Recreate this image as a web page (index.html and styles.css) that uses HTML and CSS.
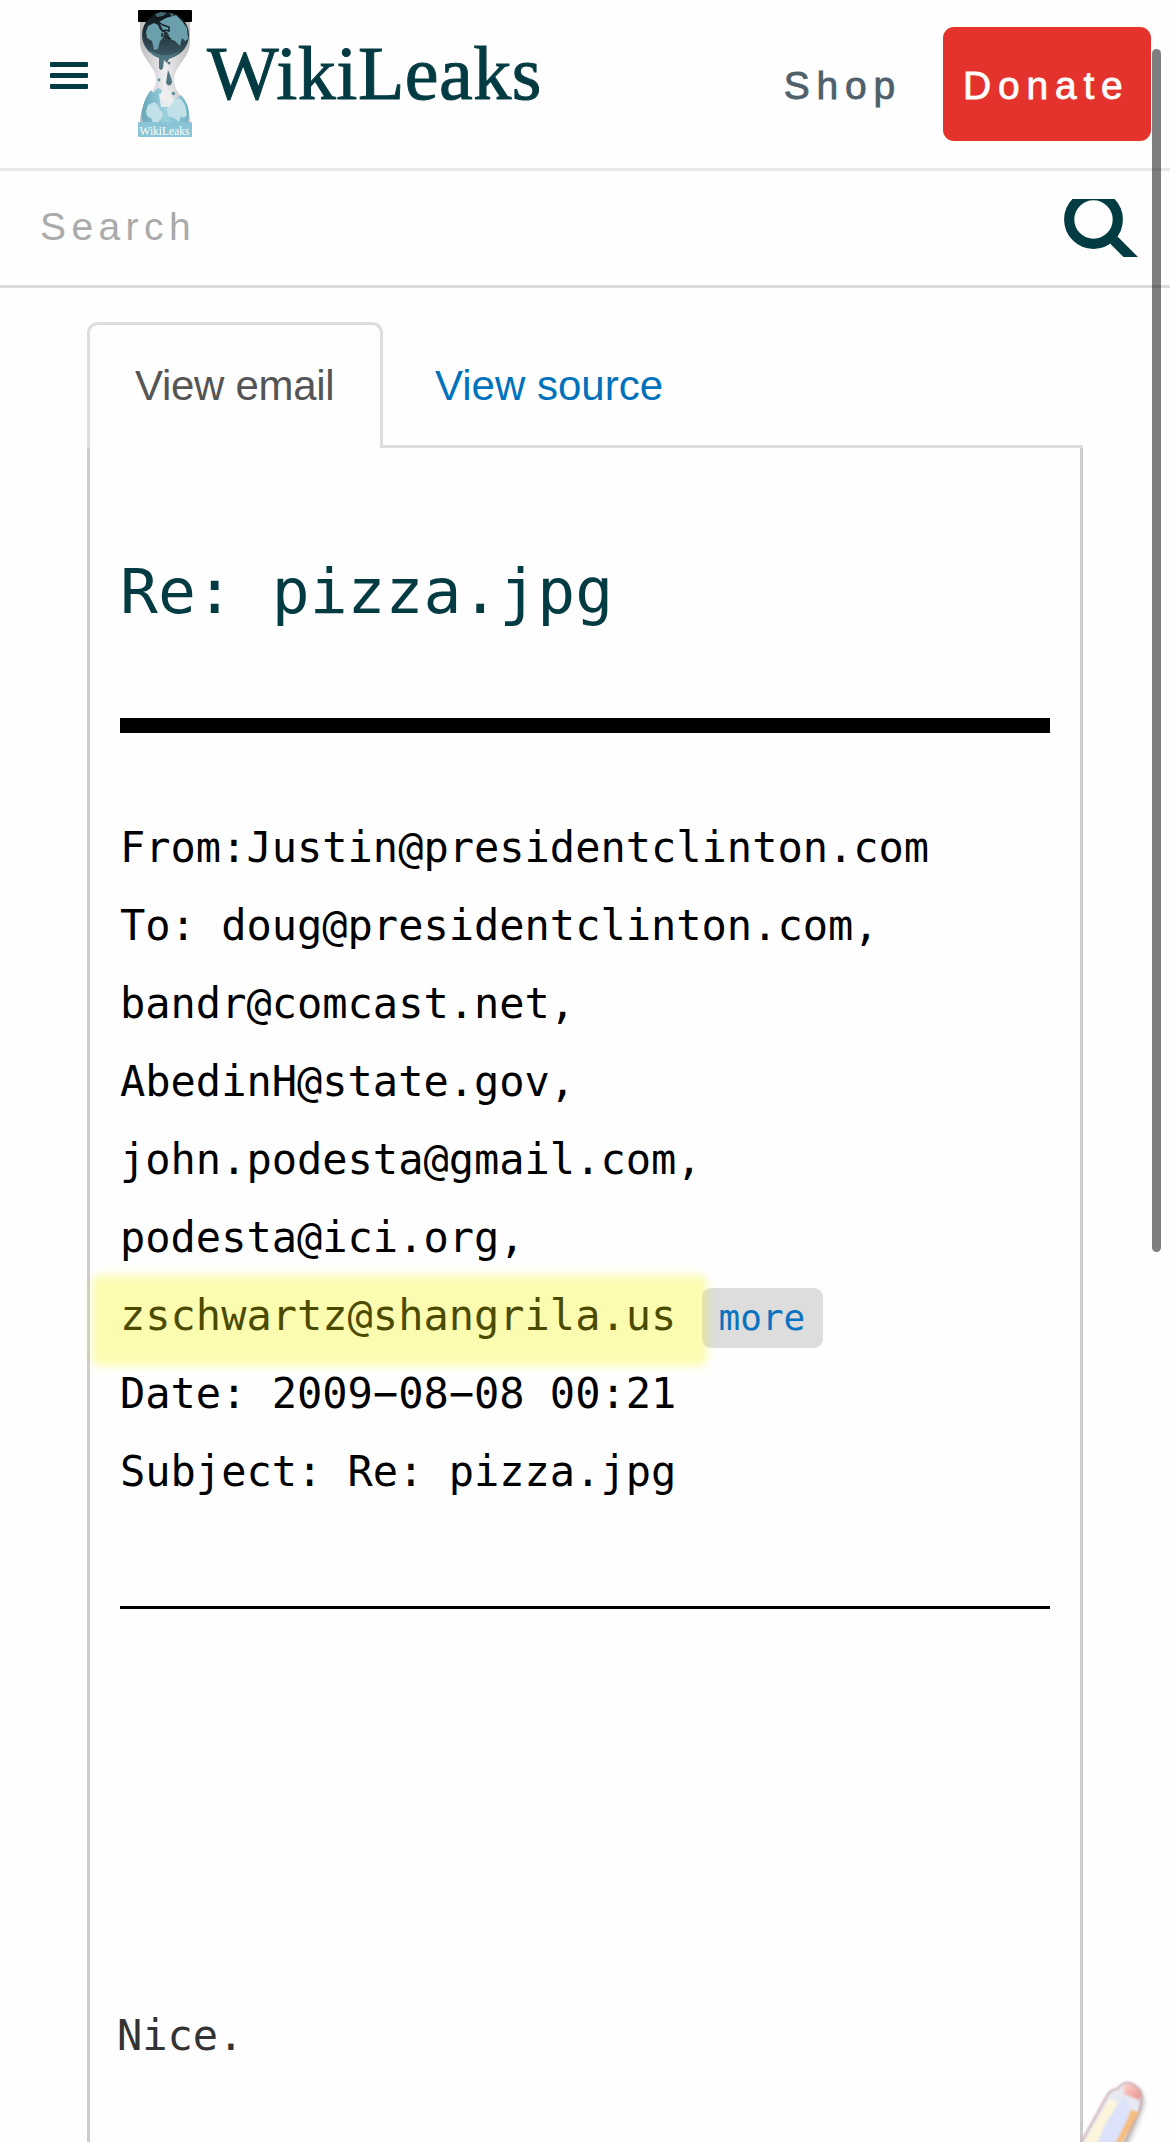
FILE: index.html
```html
<!DOCTYPE html>
<html lang="en">
<head>
<meta charset="utf-8">
<title>WikiLeaks - Re: pizza.jpg</title>
<link rel="stylesheet" href="styles.css">
</head>
<body>
<header class="topbar">
  <button class="menu" aria-label="Menu"><span></span><span></span><span></span></button>
  <svg class="logo" viewBox="0 0 54 127" width="54" height="127">
    <defs>
      <linearGradient id="cap" x1="0" y1="0" x2="0" y2="1"><stop offset="0" stop-color="#0a1114"/><stop offset="1" stop-color="#3f5d68"/></linearGradient>
      <linearGradient id="glass" x1="0" y1="0" x2="1" y2="0"><stop offset="0" stop-color="#bdbdbf"/><stop offset=".5" stop-color="#eeeef0"/><stop offset="1" stop-color="#bdbdbf"/></linearGradient>
      <linearGradient id="low" x1="0" y1="0" x2="1" y2="0"><stop offset="0" stop-color="#67a6b8"/><stop offset=".5" stop-color="#9dd0de"/><stop offset="1" stop-color="#6fb2c4"/></linearGradient>
    </defs>
    <path d="M2 8H52V32C52 48 36 56 36 70C36 84 52 90 52 113H2C2 90 18 84 18 70C18 56 2 48 2 32Z" fill="url(#glass)"/>
    <rect width="54" height="12" rx="1" fill="#000"/>
    <circle cx="27.500" cy="25" r="23.500" fill="url(#cap)"/>
    <path d="M10 16L16 13L20 15L22 20L26 22L25 28L22 31L20 39L16 40L14 31L9 28L8 22Z" fill="#6b9fac"/>
    <path d="M21 12L28 8L38 5L44 11L49 18L50 29L47 31L44 28L42 36L37 31L32 29L30 23L25 20Z" fill="#6b9fac"/>
    <path d="M17 4L23 2L29 3L25 6L19 7ZM31 3L36 4L34 7Z" fill="#45666f"/>
    <path d="M19 11L25 15L31 17L31 21L27 20L24 22M24 23V27M28 27L33 29" stroke="#14242a" stroke-width="1.500" fill="none"/>
    <path d="M11 40Q27 50 42 41Q35 48 31 49L29 53L26 50L25 58Q23 62 21 58L21 48Q14 46 11 40Z" fill="#4e7480"/>
    <path d="M30 60Q34 69 34 73Q31 78 28 73Z" fill="#4e7480"/>
    <circle cx="31" cy="53" r="1.500" fill="#4e7480"/><circle cx="21" cy="70" r="1.400" fill="#5c8e9c"/><circle cx="35.500" cy="83.500" r="1.700" fill="#5c8e9c"/>
    <path d="M13 80L15 83L20 78L24 80L22 88L31 94L43 85Q52 95 51 107Q49 117 43 119H12Q2 114 4 101Q6 88 13 80Z" fill="url(#low)"/>
    <path d="M10 95L16 92L20 95L22 100L25 103L24 108L21 111L19 117L15 117L14 109L9 106L8 101ZM33 90L42 88L47 95L49 105L46 108L43 106L41 112L36 108L30 106L29 99Z" fill="#c1e0e7"/>
    <path d="M21 84L31 80L36 91L31 97H23Z" fill="#eeeef0" opacity=".9"/>
    <rect y="112" width="54" height="15" rx="1" fill="#89c5d6"/>
    <text class="logo-caption" x="1.500" y="125" textLength="50" lengthAdjust="spacingAndGlyphs">WikiLeaks</text>
  </svg>
  <span class="wordmark">WikiLeaks</span>
  <nav class="actions">
    <a class="shop">Shop</a>
    <a class="donate">Donate</a>
  </nav>
</header>
<div class="search">
  <span class="search-label">Search</span>
  <svg class="search-icon" viewBox="0 0 74 58" width="74" height="58">
    <circle cx="29.500" cy="20.500" r="24.300" fill="none" stroke="#033b43" stroke-width="10.200"/>
    <path d="M46 44.500L59.500 58H74L53.500 37.500Z" fill="#033b43"/>
  </svg>
</div>
<main class="content">
  <div class="tabs">
    <a class="tab active">View email</a>
    <a class="tab">View source</a>
  </div>
  <article class="panel">
    <h1 class="title">Re: pizza.jpg</h1>
    <div class="meta">
      <div>From:Justin@presidentclinton.com</div>
      <div>To: doug@presidentclinton.com,</div>
      <div>bandr@comcast.net,</div>
      <div>AbedinH@state.gov,</div>
      <div>john.podesta@gmail.com,</div>
      <div>podesta@ici.org,</div>
      <div class="marked">zschwartz@shangrila.us <a class="more">more</a></div>
      <div>Date: 2009−08−08 00:21</div>
      <div>Subject: Re: pizza.jpg</div>
    </div>
    <p class="message">Nice.</p>
  </article>
</main>
<div class="scrollbar"></div>
<svg class="pencil" viewBox="0 0 90 72" width="90" height="72">
  <defs>
    <linearGradient id="rubber" x1="0" y1="0" x2="1" y2="1"><stop offset="0" stop-color="#fbd5d0"/><stop offset="1" stop-color="#ec8f89"/></linearGradient>
    <filter id="soft" x="-20%" y="-20%" width="140%" height="140%"><feGaussianBlur stdDeviation="2.500"/></filter>
    <filter id="edge"><feGaussianBlur stdDeviation=".9"/></filter>
  </defs>
  <path d="M20 80L46 24L59 15L70 20L75 32L69 50L56 80Z" fill="#888" opacity=".5" filter="url(#soft)"/>
  <g filter="url(#edge)">
    <path d="M7 80L38 24Q42 19 47 19L51 15Q56 11 63 14L69 19Q73 24 71 30L70 39L51 80Z" fill="#e6e9f2" stroke="#c39a9f" stroke-width="1.600"/>
    <path d="M11 78L39 29L48 32L27 80Z" fill="#fdf4dc"/>
    <path d="M39 80L61 40L69 42L48 80Z" fill="#f5bd7d"/>
    <path d="M25 80Q35 48 54 28Q62 33 58 48L42 80Z" fill="#dbe2fa"/>
    <path d="M53 17Q57 12 63 15L69 20Q72 25 69 30L54 24Z" fill="url(#rubber)"/>
  </g>
</svg>
</body>
</html>
```
FILE: styles.css
```css
* { box-sizing: border-box; }
html, body { margin: 0; height: 2142px; overflow: hidden; }
body {
  position: relative;
  background: #fefefe;
  color: #000;
  font-family: "Liberation Sans", Arial, sans-serif;
}

.topbar {
  display: flex;
  align-items: flex-start;
  height: 171px;
  padding: 10px 19px 0 50px;
  border-bottom: 3px solid #e8e8e8;
}
.menu {
  display: flex;
  flex-direction: column;
  gap: 6px;
  width: 38px;
  margin: 52px 50px 0 0;
  padding: 0;
  border: 0;
  background: none;
}
.menu span { height: 5px; border-radius: 1px; background: #033b43; }
.logo { flex: none; }
.logo-caption { font: 12px "Liberation Serif", serif; fill: #fff; }
.wordmark {
  margin: 21px 0 0 15px;
  font: 76px/84px "Liberation Serif", "Times New Roman", serif;
  letter-spacing: 0.5px;
  color: #033b43;
  -webkit-text-stroke: 1px #033b43;
}
.actions {
  display: flex;
  margin: 17px 0 0 auto;
  font-size: 39px;
  line-height: 117px;
  letter-spacing: 6.8px;
}
.shop { margin-right: 41px; color: #4f606a; -webkit-text-stroke: 0.8px #4f606a; }
.donate {
  width: 208px;
  height: 114px;
  padding-left: 20px;
  border-radius: 11px;
  background: #e4332c;
  color: #fff;
  -webkit-text-stroke: 0.8px #fff;
}

.search {
  display: flex;
  justify-content: space-between;
  align-items: center;
  height: 117px;
  padding: 0 32px 0 40px;
  border-bottom: 3px solid #dcdcdc;
}
.search-label { margin-bottom: 2px; font-size: 39px; letter-spacing: 5.4px; color: #aaa; }

.content { width: 996px; margin: 34px 0 0 87px; }
.tabs {
  display: flex;
  height: 126px;
  border-bottom: 3px solid #ddd;
}
.tab {
  height: 126px;
  padding: 0 49px;
  border: 3px solid transparent;
  border-bottom: 0;
  font-size: 42px;
  line-height: 122px;
  color: #0072bc;
}
.tab.active {
  width: 296px;
  padding: 0 45px;
  border-color: #ddd;
  border-radius: 11px 11px 0 0;
  background: #fefefe;
  letter-spacing: -0.3px;
  color: #555;
}

.panel {
  height: 1700px;
  padding: 0 30px;
  border: solid #ccc;
  border-width: 0 3px;
  font-family: "DejaVu Sans Mono", monospace;
}
.title {
  height: 285px;
  margin: 0;
  padding-top: 102px;
  border-bottom: 15px solid #000;
  font-size: 63px;
  font-weight: 400;
  line-height: 84px;
  color: #033b43;
}
.meta {
  height: 876px;
  padding-top: 76px;
  border-bottom: 3px solid #000;
  font-size: 42px;
  line-height: 78px;
}
.marked { position: relative; height: 78px; white-space: pre; }
.marked::after {
  content: "";
  position: absolute;
  left: -28px;
  top: -2px;
  width: 615px;
  height: 91px;
  border-radius: 8px;
  background: rgba(250, 250, 0, 0.3);
  filter: blur(4px);
}
.more {
  display: inline-block;
  height: 60px;
  padding: 0 18px 0 17px;
  border-radius: 9px;
  background: #ddd;
  font-size: 36px;
  line-height: 60px;
  color: #0b72bf;
}
.message {
  margin: 388px 0 0 -3px;
  font-size: 42px;
  line-height: 78px;
  color: #333;
}

.scrollbar {
  position: absolute;
  left: 1152px;
  top: 49px;
  width: 9px;
  height: 1203px;
  border-radius: 5px;
  background: rgba(0, 0, 0, 0.5);
}
.pencil { position: absolute; left: 1070px; top: 2070px; }
```
